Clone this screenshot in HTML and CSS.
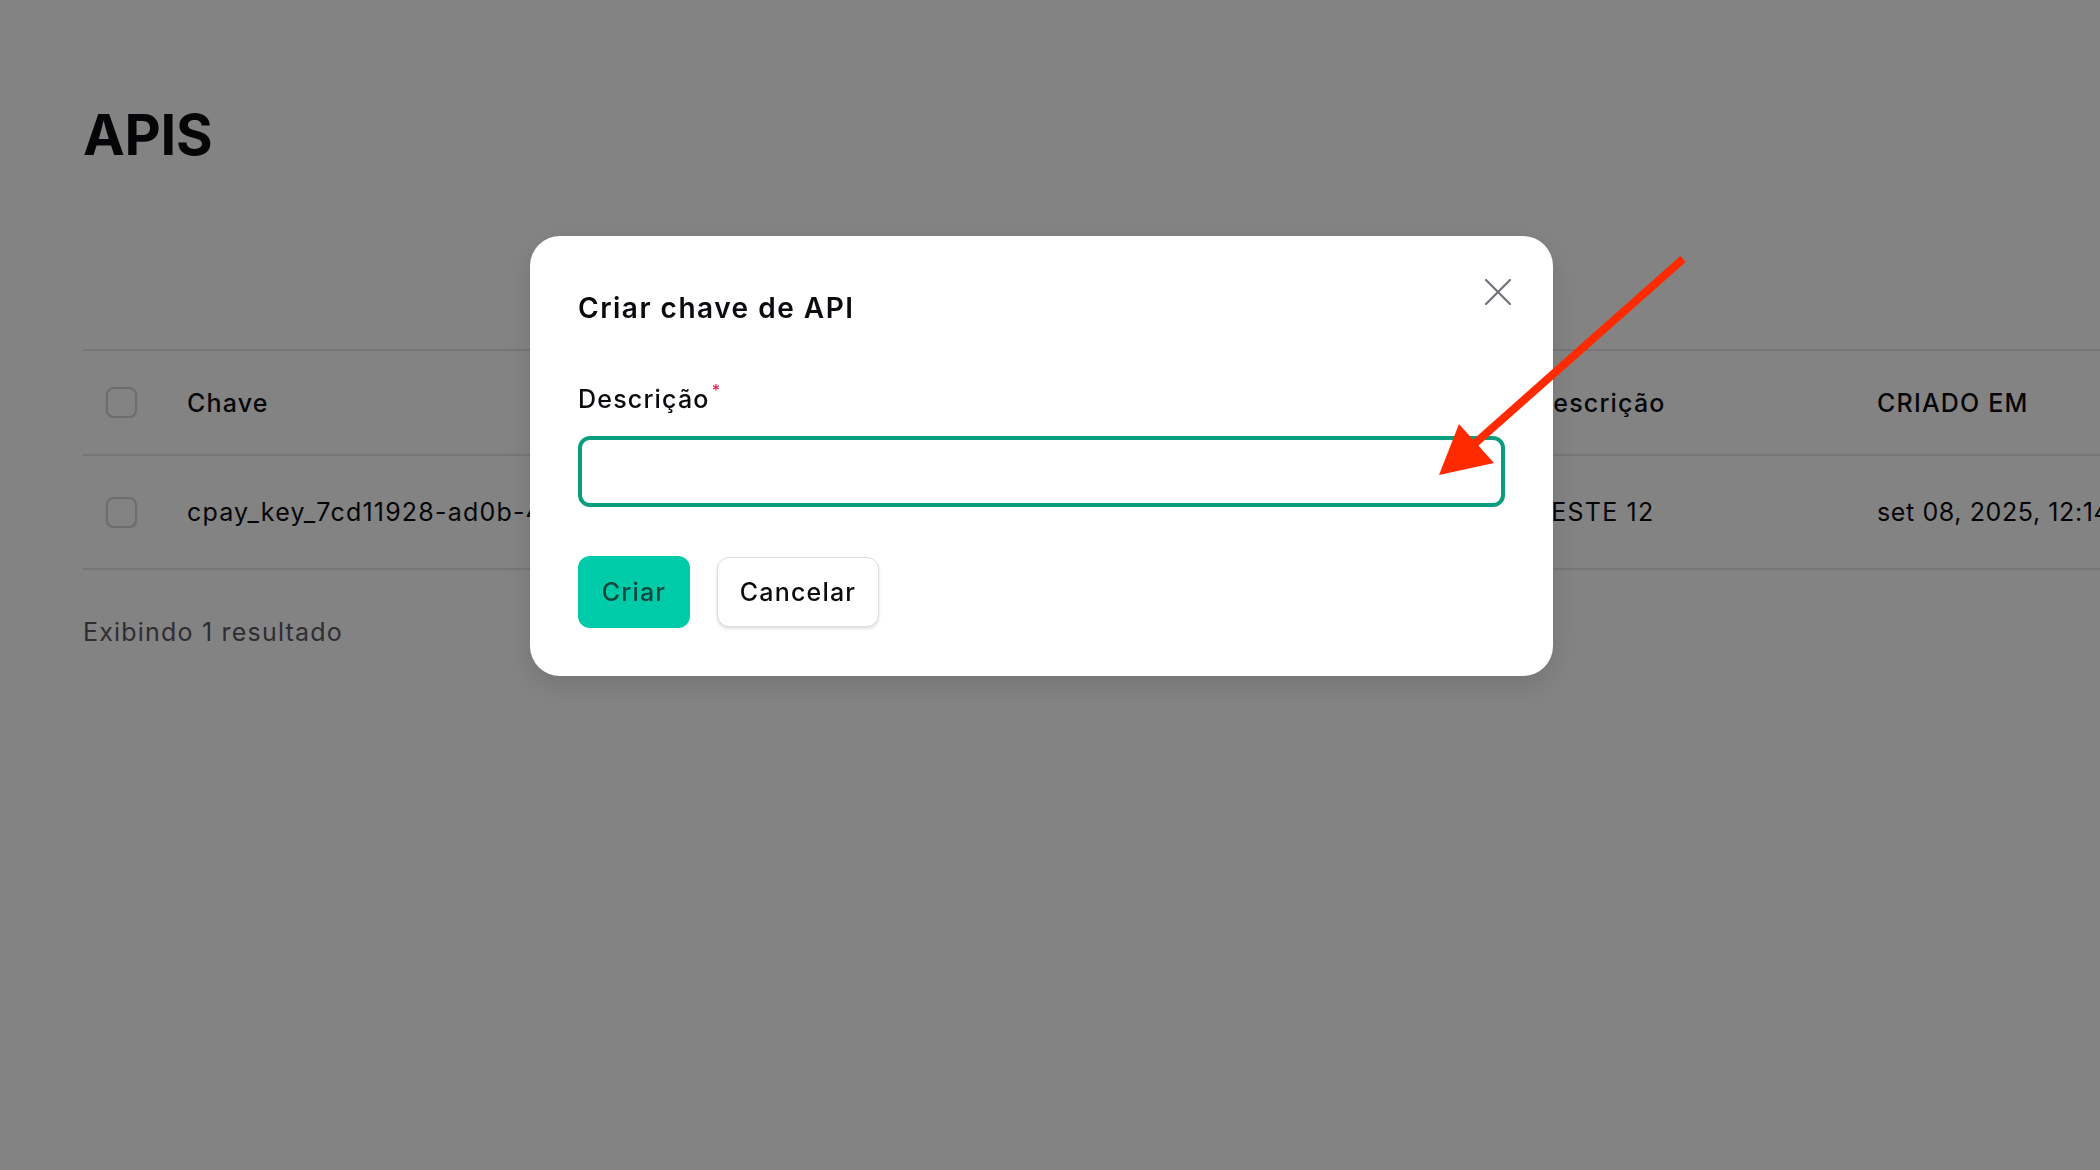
FILE: index.html
```html
<!DOCTYPE html>
<html lang="pt-BR">
<head>
<meta charset="utf-8">
<title>APIS</title>
<link rel="stylesheet" href="styles.css">
</head>
<body>
<main class="page">
  <h1 class="page-title">APIS</h1>
  <div class="table">
    <div class="row head">
      <div class="cell cb"><span class="checkbox"></span></div>
      <div class="cell key">Chave</div>
      <div class="cell desc">Descrição</div>
      <div class="cell date">CRIADO EM</div>
    </div>
    <div class="row body">
      <div class="cell cb"><span class="checkbox"></span></div>
      <div class="cell key">cpay_key_7cd11928-ad0b-4f3e-9c1a-21b7e0d4a9f3</div>
      <div class="cell desc">TESTE 12</div>
      <div class="cell date date-value">set 08, 2025, 12:14</div>
    </div>
  </div>
  <p class="result-count">Exibindo 1 resultado</p>
</main>

<div class="overlay">
  <div class="modal">
    <div class="modal-header">
      <h2 class="modal-title">Criar chave de API</h2>
      <button class="close" aria-label="Fechar">
        <svg width="26" height="26" viewBox="0 0 26 26"><path d="M1 1L25 25M25 1L1 25" stroke="#71717a" stroke-width="2.2" stroke-linecap="round" fill="none"/></svg>
      </button>
    </div>
    <label class="field-label">Descrição<span class="req">*</span></label>
    <div class="input"></div>
    <div class="actions">
      <button class="btn primary">Criar</button>
      <button class="btn secondary">Cancelar</button>
    </div>
  </div>
</div>

<svg class="arrow" width="2100" height="1170" viewBox="0 0 2100 1170">
  <line x1="1683" y1="259" x2="1472" y2="446" stroke="#ff2a00" stroke-width="8"/>
  <polygon points="1439,475 1459,424 1494,463" fill="#ff2a00"/>
</svg>
</body>
</html>
```
FILE: styles.css
```css
* { box-sizing: border-box; }
html, body { margin: 0; padding: 0; }
body {
  width: 2100px;
  height: 1170px;
  overflow: hidden;
  background: #ffffff;
  font-family: Inter, "Noto Sans", "Liberation Sans", sans-serif;
  color: #0b0b0f;
  position: relative;
}
.page {
  padding: 101px 0 0 83px;
}
.page-title {
  margin: 0;
  font-size: 56px;
  font-weight: 700;
  line-height: 68px;
  letter-spacing: -0.3px;
  color: #0b0b0f;
}
.table {
  margin-top: 180px;
  border-top: 2px solid #e6e6e6;
  width: 2017px;
}
.row {
  display: flex;
  align-items: center;
  border-bottom: 2px solid #e6e6e6;
  white-space: nowrap;
  font-size: 25px;
  letter-spacing: 1.2px;
}
.row.head { height: 105px; font-weight: 500; }
.row.body { height: 114px; font-weight: 400; }
.cell { overflow: hidden; }
.cell.cb { width: 104px; padding-left: 23px; display: flex; }
.cell.key { width: 1347px; }
.cell.desc { width: 343px; }
.cell.date { flex: 1; }
.date-value { letter-spacing: 0.6px; }
.checkbox {
  width: 31px;
  height: 31px;
  border: 2px solid #d4d4d8;
  border-radius: 8px;
  background: #fff;
  box-shadow: 0 1px 2px rgba(0,0,0,0.08);
}
.result-count {
  margin: 47px 0 0;
  font-size: 25px;
  letter-spacing: 1.2px;
  color: #5a5a64;
  line-height: 30px;
}
.overlay {
  position: fixed;
  inset: 0;
  background: rgba(0,0,0,0.485);
}
.modal {
  margin: 236px 0 0 530px;
  width: 1023px;
  height: 440px;
  background: #fff;
  border-radius: 30px;
  padding: 50px 42px 48px 48px;
  box-shadow: 0 10px 30px rgba(0,0,0,0.12);
}
.modal-header {
  display: flex;
  justify-content: space-between;
  align-items: flex-start;
}
.modal-title {
  margin: 5px 0 0;
  font-size: 28px;
  font-weight: 600;
  line-height: 34px;
  letter-spacing: 1.5px;
  color: #0b0b0f;
}
.close {
  border: 0;
  background: none;
  padding: 0;
  margin-top: -7px;
  width: 26px;
  height: 26px;
  display: flex;
}
.field-label {
  display: block;
  margin-top: 50px;
  font-size: 25px;
  font-weight: 500;
  line-height: 30px;
  letter-spacing: 1.2px;
  color: #0b0b0f;
}
.req {
  color: #e11d48;
  font-size: 16px;
  vertical-align: 12px;
  margin-left: 2px;
}
.input {
  margin-top: 22px;
  width: 927px;
  height: 71px;
  border: 4px solid #0a9e7e;
  border-radius: 12px;
  background: #fff;
}
.actions {
  display: flex;
  gap: 27px;
  margin-top: 49px;
  align-items: center;
}
.btn {
  font-family: inherit;
  font-size: 25px;
  font-weight: 500;
  letter-spacing: 1.2px;
  border-radius: 12px;
  cursor: pointer;
}
.btn.primary {
  width: 112px;
  height: 72px;
  background: #00cba9;
  color: #15463d;
  border: 0;
}
.btn.secondary {
  width: 162px;
  height: 70px;
  background: #fff;
  color: #0b0b0f;
  border: 1.5px solid #dcdcdc;
  box-shadow: 0 2px 3px rgba(0,0,0,0.12);
}
.arrow {
  position: absolute;
  left: 0;
  top: 0;
  pointer-events: none;
}
```
